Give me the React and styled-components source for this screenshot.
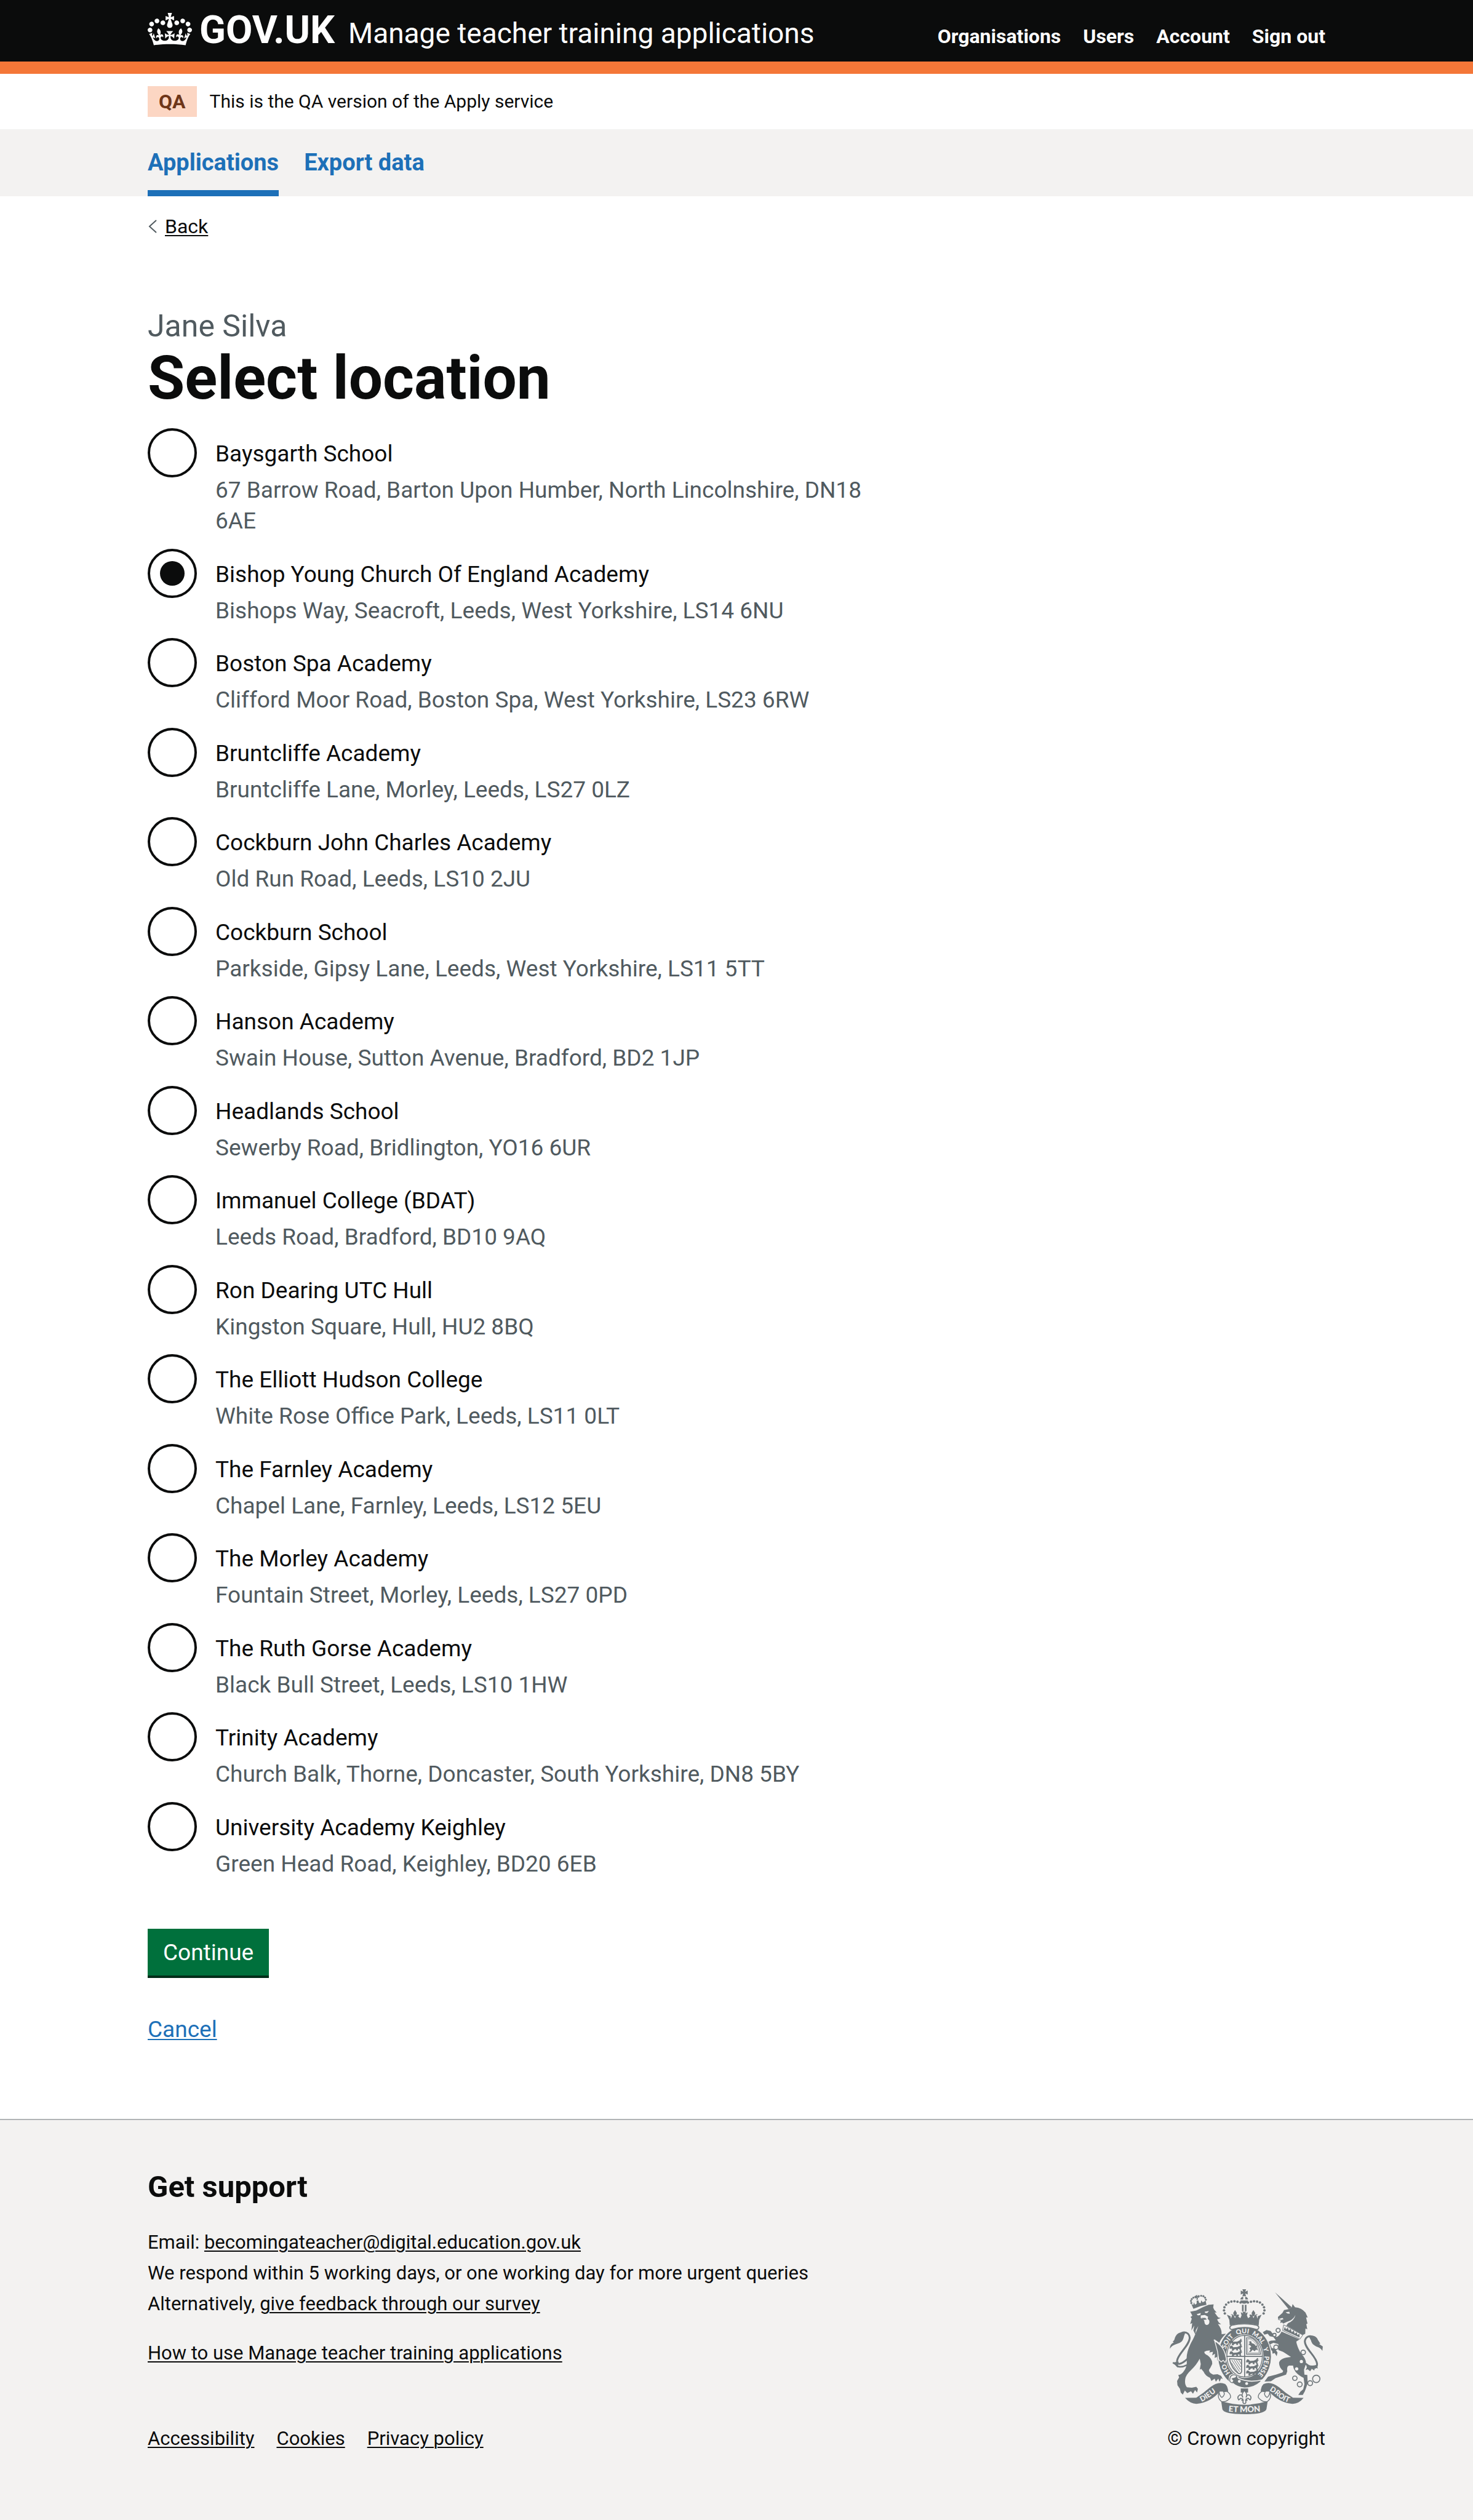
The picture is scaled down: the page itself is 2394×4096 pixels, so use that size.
import React, { useState } from "react";
import styled, { createGlobalStyle, css } from "styled-components";

const color = {
  text: "#0b0c0c",
  secondary: "#505a5f",
  link: "#1d70b8",
  brand: "#f47738",
  panel: "#f3f2f1",
  border: "#b1b4b6",
  green: "#00703c",
  greenShadow: "#002d18",
  tagBack: "#fcd6c3",
  tagText: "#6e3619",
  crest: "#6f777b",
  white: "#ffffff",
};

const GlobalStyle = createGlobalStyle`
  *, *::before, *::after { box-sizing: border-box; }
  body {
    margin: 0;
    background: ${color.panel};
    color: ${color.text};
    font-family: Roboto, "Liberation Sans", sans-serif;
    font-size: 31px;
    line-height: 50px;
  }
`;

const Page = styled.div`
  display: flex;
  flex-direction: column;
  min-height: 100vh;
  background: ${color.white};
`;

const Container = styled.div`
  width: calc(100% - 60px);
  max-width: 1914px;
  margin: 0 auto;
`;

const underlined = css`
  text-decoration: underline;
  text-decoration-thickness: 2px;
  text-underline-offset: 3px;
`;

const TextLink = styled.a`
  color: ${(p) => (p.$blue ? color.link : color.text)};
  ${underlined}
`;

/* Header */

const Header = styled.header`
  background: ${color.text};
  border-bottom: 20px solid ${color.brand};
`;

const HeaderRow = styled(Container)`
  display: flex;
  align-items: baseline;
  justify-content: space-between;
  padding: 19px 0 11px;
  line-height: 60px;
  color: ${color.white};
`;

const Brand = styled.div`
  display: flex;
  align-items: baseline;
  gap: 22px;
`;

const HomeLink = styled.a`
  color: inherit;
  text-decoration: none;
  font-size: 63px;
  font-weight: 700;
  white-space: nowrap;
`;

const CrownIcon = styled.svg`
  width: 72px;
  height: 53px;
  margin-right: 12px;
  vertical-align: -4px;
  fill: currentColor;
`;

const ServiceLink = styled.a`
  color: inherit;
  text-decoration: none;
  font-size: 46px;
`;

const AccountNav = styled.nav`
  display: flex;
  gap: 36px;
`;

const AccountLink = styled.a`
  color: inherit;
  text-decoration: none;
  font-size: 32px;
  font-weight: 700;
`;

/* Phase banner */

const Banner = styled(Container)`
  display: flex;
  align-items: center;
  gap: 21px;
  padding: 20px 0;
  font-size: 30px;
`;

const Tag = styled.strong`
  padding: 0 18px;
  background: ${color.tagBack};
  color: ${color.tagText};
  font-size: 32px;
`;

/* Primary navigation */

const PrimaryNav = styled.nav`
  background: ${color.panel};
`;

const PrimaryList = styled(Container)`
  display: flex;
  gap: 41px;
`;

const PrimaryLink = styled.a`
  padding: 29px 0 20px;
  border-bottom: 10px solid ${(p) => (p.$current ? color.link : "transparent")};
  color: ${color.link};
  font-size: 38px;
  font-weight: 700;
  text-decoration: none;
`;

/* Main */

const Main = styled(Container).attrs({ as: "main" })`
  display: flex;
  flex: 1;
  flex-direction: column;
  padding: 29px 0 120px;
`;

const BackLink = styled.a`
  display: flex;
  align-items: center;
  align-self: flex-start;
  gap: 11px;
  color: ${color.text};
  font-size: 32px;
  line-height: 40px;
  text-decoration: none;
`;

const BackText = styled.span`
  ${underlined}
`;

const Chevron = styled.svg`
  width: 17px;
  height: 24px;
`;

const Form = styled.form`
  display: flex;
  flex: 1;
  flex-direction: column;
  align-items: flex-start;
  margin-top: 112px;
`;

const Caption = styled.span`
  color: ${color.secondary};
  font-size: 50px;
  line-height: 60px;
`;

const Title = styled.h1`
  margin: 5px 0 31px;
  font-size: 98px;
  line-height: 100px;
`;

const RadioList = styled.div`
  display: flex;
  flex: 1;
  flex-direction: column;
  justify-content: space-between;
  gap: 18px;
`;

const RadioItem = styled.div`
  display: flex;
  gap: 30px;
`;

const Radio = styled.input`
  appearance: none;
  display: grid;
  flex: none;
  place-content: center;
  width: 80px;
  height: 80px;
  margin: 0;
  border: 4px solid ${color.text};
  border-radius: 50%;
  background: ${color.white};
  cursor: pointer;

  &:checked::before {
    content: "";
    width: 40px;
    height: 40px;
    border-radius: 50%;
    background: ${color.text};
  }
`;

const RadioText = styled.div`
  display: flex;
  flex-direction: column;
  max-width: 1100px;
`;

const RadioLabel = styled.label`
  padding: 17px 0 9px;
  font-size: 37px;
  cursor: pointer;
`;

const RadioHint = styled.span`
  color: ${color.secondary};
  font-size: 37px;
`;

const SubmitButton = styled.button`
  margin: 80px 0 63px;
  padding: 14px 25px 12px;
  border: 0;
  background: ${color.green};
  box-shadow: 0 4px 0 ${color.greenShadow};
  color: ${color.white};
  font: inherit;
  font-size: 37px;
  cursor: pointer;
`;

const CancelLink = styled(TextLink)`
  font-size: 37px;
`;

/* Footer */

const Footer = styled.footer`
  border-top: 2px solid ${color.border};
  background: ${color.panel};
`;

const FooterRow = styled(Container)`
  display: flex;
  align-items: flex-end;
  justify-content: space-between;
  padding: 79px 0 107px;
`;

const SupportTitle = styled.h2`
  margin: 0 0 35px;
  font-size: 49px;
  line-height: 60px;
`;

const SupportLine = styled.p`
  margin: 0;
`;

const GuideLine = styled(SupportLine)`
  margin: 30px 0 89px;
`;

const MetaLinks = styled.nav`
  display: flex;
  gap: 36px;
`;

const Copyright = styled.a`
  display: flex;
  flex-direction: column;
  align-items: center;
  gap: 15px;
  color: ${color.text};
  text-decoration: none;
`;

const CrestArt = styled.svg`
  width: 249px;
  height: 203px;
  overflow: visible;
  font-family: Lato, sans-serif;
  font-weight: 900;
`;

const Crown = () => (
  <CrownIcon viewBox="0 0 132 97" aria-hidden="true">
    <path
      fillRule="evenodd"
      d="M25 30.2c3.5 1.5 7.7-.2 9.1-3.7 1.5-3.6-.2-7.8-3.9-9.2-3.6-1.4-7.6.3-9.1 3.9-1.4 3.5.3 7.5 3.9 9zM9 39.5c3.6 1.5 7.8-.2 9.2-3.7 1.5-3.6-.2-7.8-3.9-9.1-3.6-1.5-7.6.2-9.1 3.8-1.4 3.5.3 7.5 3.8 9zM4.4 57.2c3.5 1.5 7.7-.2 9.1-3.8 1.5-3.6-.2-7.7-3.9-9.1-3.5-1.5-7.6.3-9.1 3.8-1.4 3.5.3 7.6 3.9 9.1zm38.3-21.4c3.5 1.5 7.7-.2 9.1-3.8 1.5-3.6-.2-7.7-3.9-9.1-3.6-1.5-7.6.3-9.1 3.8-1.3 3.6.4 7.7 3.9 9.1zm64.4-5.6c-3.6 1.5-7.8-.2-9.1-3.7-1.5-3.6.2-7.8 3.8-9.2 3.6-1.4 7.7.3 9.2 3.9 1.3 3.5-.4 7.5-3.9 9zm15.9 9.3c-3.6 1.5-7.7-.2-9.1-3.7-1.5-3.6.2-7.8 3.7-9.1 3.6-1.5 7.7.2 9.2 3.8 1.5 3.5-.3 7.5-3.8 9zm4.7 17.7c-3.6 1.5-7.8-.2-9.2-3.8-1.5-3.6.2-7.7 3.9-9.1 3.6-1.5 7.7.3 9.2 3.8 1.3 3.5-.4 7.6-3.9 9.1zM89.3 35.8c-3.6 1.5-7.8-.2-9.2-3.8-1.4-3.6.2-7.7 3.9-9.1 3.6-1.5 7.7.3 9.2 3.8 1.4 3.6-.3 7.7-3.9 9.1zM69.7 17.7l8.9 4.7V9.3l-8.9 2.8c-.2-.3-.5-.6-.9-.9L72.4 0H59.6l3.5 11.2c-.3.3-.6.5-.9.9l-8.8-2.8v13.1l8.8-4.7c.3.3.6.7.9.9l-5 15.4v.1c-.2.8-.4 1.6-.4 2.4 0 4.1 3.1 7.5 7 8.1h.2c.3 0 .7.1 1 .1.4 0 .7 0 1-.1h.2c4-.6 7.1-4.1 7.1-8.1 0-.8-.1-1.7-.4-2.4V34l-5.1-15.4c.4-.2.7-.6 1-.9zM66 92.8c16.9 0 32.8 1.1 47.1 3.2 4-16.9 8.9-26.7 14-33.5l-9.6-3.4c1 4.9 1.1 7.2 0 10.2-1.5-1.4-3-4.3-4.2-8.7L108.6 76c2.8-2 5-3.2 7.5-3.3-4.4 9.4-10 11.9-13.6 11.2-4.3-.8-6.3-4.6-5.6-7.9 1-4.7 5.7-5.9 8-.5 4.3-8.7-3-11.4-7.6-8.8 7.1-7.2 7.9-13.5 2.1-21.1-8 6.1-8.1 12.3-4.5 20.8-4.7-5.4-12.1-2.5-9.5 6.2 3.4-5.2 7.9-2 7.2 3.1-.6 4.3-6.4 7.8-13.5 7.2-10.3-.9-10.9-8-11.2-13.8 2.5-.5 7.1 1.8 11 7.3L80.2 60c-4.1 4.4-8 5.3-12.3 5.4 1.4-4.4 8-11.6 8-11.6H55.5s6.4 7.2 7.9 11.6c-4.2-.1-8-1-12.3-5.4l1.4 16.4c3.9-5.5 8.5-7.7 10.9-7.3-.3 5.8-.9 12.8-11.1 13.8-7.2.6-12.9-2.9-13.5-7.2-.7-5 3.8-8.3 7.1-3.1 2.7-8.7-4.6-11.6-9.4-6.2 3.7-8.5 3.6-14.7-4.6-20.8-5.8 7.6-5 13.9 2.2 21.1-4.7-2.6-11.9.1-7.7 8.8 2.3-5.5 7.1-4.2 8.1.5.7 3.3-1.3 7.1-5.7 7.9-3.5.7-9-1.8-13.5-11.2 2.5.1 4.7 1.3 7.5 3.3l-4.7-15.4c-1.2 4.4-2.7 7.2-4.3 8.7-1.1-3-.9-5.3 0-10.2l-9.5 3.4c5 6.9 9.9 16.7 14 33.5 14.8-2.1 30.8-3.2 47.7-3.2z"
    />
  </CrownIcon>
);

const archPearls = [
  [479, 161], [464, 157], [449, 155], [434, 156], [420, 161], [408, 171], [400, 184], [398, 199], [402, 214],
];
const smallPearls = [
  [258, 133], [248, 137], [240, 144], [236, 153], [238, 163], [274, 130], [286, 128], [297, 130], [305, 137], [309, 147],
];
const chainRings = [
  [663, 297, 10], [645, 320, 8], [653, 380, 11], [786, 405, 11], [745, 532, 11], [769, 562, 12], [820, 556, 12], [850, 535, 18],
];
const mottoes = [
  ["HO", "16%"], ["SOIT", "36%"], ["QUI", "48.5%"], ["MAL", "60.5%"], ["Y", "70%"], ["PENSE", "82%"],
];

/* One quarter with three walking lions. */
const ThreeLions = ({ x, y }) => (
  <g transform={`translate(${x} ${y})`} fill={color.crest}>
    {[0, 27, 54].map((dy) => (
      <path
        key={dy}
        d={`M2 ${dy + 6}l6-5 8 3 3 5 20-1 12-6 4-7 5 1-1 7 5 2-6 5-2 9 4 5-9 1-2-8-8 1 3 6-9 1-2-7-9 2-4 6-9 0 3-6-2-5-6 2-7-3 4-3z`}
      />
    ))}
  </g>
);

const Crest = () => (
  <CrestArt viewBox="132 96 750 612" aria-hidden="true">
    <defs>
      <path id="garter" d="M499 541a97 115 0 0 1 0-230a97 115 0 0 1 0 230" />
      <path id="scrollLeft" d="M272 655Q312 638 344 611Q362 596 392 590" />
      <path id="scrollRight" d="M604 584Q640 600 664 624Q690 645 734 657" />
      <path id="scrollMid" d="M400 693Q498 704 596 693" />
    </defs>

    {/* Lion tail */}
    <g fill="none" stroke={color.crest} strokeLinecap="round">
      <path strokeWidth="9" d="M180 318C200 298 228 306 230 334C228 372 172 412 168 446C166 466 182 470 220 436" />
      <path strokeWidth="8" d="M150 457Q164 462 172 474Q190 480 214 468" />
    </g>
    <path fill={color.crest} d="M133 388C132 372 140 362 152 356L146 352C158 346 154 336 162 324C172 308 190 304 208 312C200 322 202 340 190 352C174 366 144 364 133 388ZM148 455L176 450L170 480Z" />

    {/* Lion */}
    <path
      fill={color.crest}
      d="M236 212L232 206L262 200Q295 182 322 172L347 170L345 186L350 196L362 210L352 210L362 224L370 234L382 237L364 244L372 258L384 268L368 266Q388 290 386 316L408 314Q384 335 373 362L350 345L375 374Q398 384 402 412L408 440L402 456L393 446L386 454L380 442L366 446L364 428L352 432L354 412L340 420L344 402L326 406L330 396Q314 394 302 402Q300 412 318 420Q342 438 340 462Q332 480 324 492Q326 508 345 514L366 512L384 520L392 536L384 532L376 550L370 534L358 549L352 534L336 545L330 530Q306 520 298 500L286 486L279 490L284 462L279 436Q262 468 238 490Q210 516 208 536Q204 562 216 576L240 578L262 574L270 584L266 602L256 590L246 608L236 596L218 605L206 592L196 612L186 602L182 584L170 566L168 545L178 528L174 516Q190 516 206 490Q218 470 215 442Q212 400 244 345Q258 318 272 276L260 296L258 318L248 298L252 274L238 298L242 262L232 266L240 240L234 232L243 226Z"
    />
    <g fill={color.panel}>
      <path d="M264 218L284 212L282 222L270 224ZM303 206L324 202L316 212L306 212ZM284 224L304 222L320 230L318 240L326 250Q328 268 315 271Q302 270 302 254L296 240L284 238Z" />
      <path d="M288 236L306 236L314 244L300 246Z" fill={color.crest} />
      <path d="M346 344L378 368L400 396L406 418L410 408Q404 380 384 364L352 342Z" />
    </g>

    {/* Lion's crown */}
    <g fill={color.crest}>
      {smallPearls.map(([cx, cy]) => <circle key={`${cx}-${cy}`} cx={cx} cy={cy} r="5" />)}
      <path d="M259 126L268 124L266 131L273 128L275 138L268 136L271 146L263 148L264 138L257 141L255 132L262 133ZM238 168L248 172L250 160L256 171L264 166L264 152L272 150L276 162L284 164L286 150L294 160L308 152L312 172L284 178L248 192Z" />
    </g>

    {/* Unicorn tail */}
    <g fill="none" stroke={color.crest} strokeLinecap="round">
      <path strokeWidth="9" d="M838 330C816 320 796 328 794 352C796 390 852 426 854 462C854 486 832 488 800 462" />
    </g>
    <path fill={color.crest} d="M815 330C832 318 852 326 858 344L870 362L864 364L882 376L880 398Q872 382 850 376Q828 366 824 346ZM798 460Q820 476 852 466L858 484L844 480L840 494L828 486L820 498L808 488L798 492L804 478Z" />

    {/* Unicorn */}
    <g fill={color.crest}>
      <path d="M648 111L730 184L714 193Z" />
      <path d="M714 193L730 184L734 168L746 184Q778 186 797 210L808 234L800 234L807 264L801 266L806 292L797 288L796 314L784 320Q748 300 703 274L712 262Q742 250 748 222Q736 248 706 256L688 264L682 258L674 262L676 248L664 246L662 232L684 212L692 198Z" />
      <path d="M680 303L768 342L752 352Q756 378 776 412Q800 436 800 460L790 490L792 514L806 516L808 556L800 580L794 596L784 614L762 614L772 598L786 586L792 560L788 530Q762 518 748 500Q738 488 736 470L718 470Q704 472 708 498L702 514L650 532L628 547L596 548L614 524L652 514L684 504L688 496Q666 478 668 454Q676 432 726 428Q700 410 686 402L664 394L664 364L640 358L624 366L632 384L648 388L660 406L656 424L646 408L636 412L634 398L622 388L608 356L628 348L652 346L640 330L622 326L612 314L596 318L588 306L606 296L626 300L634 310L652 330Q668 328 680 303Z" />
    </g>
    <g fill={color.panel}>
      <path d="M700 208L718 206L720 216L708 214ZM664 242L684 236L690 242L678 246Z" />
      <circle cx="777" cy="450" r="8" />
      <circle cx="754" cy="486" r="8" />
    </g>
    <path fill={color.panel} stroke={color.crest} strokeWidth="3" d="M690 270L784 320L770 340L685 298Z" />
    <path fill={color.crest} d="M690 296L696 280L702 292L710 284L716 298L724 290L730 306L740 298L744 314L754 306L758 320L768 314L768 332Z" />
    {chainRings.map(([cx, cy, r]) => (
      <circle key={`${cx}-${cy}`} cx={cx} cy={cy} r={r} fill={color.panel} stroke={color.crest} strokeWidth="5" />
    ))}

    {/* Garter */}
    <ellipse cx="499" cy="426" rx="133" ry="153" fill={color.panel} />
    <ellipse cx="499" cy="426" rx="129" ry="149" fill={color.crest} />
    <ellipse cx="499" cy="424" rx="92" ry="107" fill={color.panel} />
    <ellipse cx="499" cy="424" rx="87" ry="102" fill="none" stroke={color.crest} strokeWidth="4" />
    <g fill={color.panel} fontSize="32" textAnchor="middle">
      {mottoes.map(([word, offset]) => (
        <text key={word}>
          <textPath href="#garter" startOffset={offset}>{word}</textPath>
        </text>
      ))}
    </g>

    {/* Quartered arms */}
    <path stroke={color.crest} strokeWidth="5" d="M499 322V526M410 425H588" />
    <ThreeLions x="424" y="344" />
    <ThreeLions x="505" y="438" />
    <g fill="none" stroke={color.crest}>
      <path strokeWidth="4" d="M508 334H530Q568 350 577 414H508Z" />
      <path strokeWidth="2" d="M514 340H528Q560 354 570 408H514Z" />
      <path strokeWidth="5" d="M424 436L484 440V500Q480 512 468 508Q436 486 424 436" />
      <path strokeWidth="3" d="M436 442L474 500M447 442L478 490M458 442L480 476M434 456L466 504M470 442L482 462" />
    </g>
    <path fill={color.crest} d="M520 352L530 350L534 360L546 364L554 374L562 370L558 382L564 394L554 392L548 400L538 392L530 402L520 404L528 392L522 384L532 378L526 370L518 368L524 360Z" />

    {/* Lion's paw over the garter, and the buckle */}
    <path fill={color.crest} stroke={color.panel} strokeWidth="4" d="M352 348Q392 372 404 414L410 440L403 455L394 444L384 452L372 440L366 400Z" />
    <path fill={color.crest} stroke={color.panel} strokeWidth="5" d="M426 520Q440 506 462 518L468 532Q520 556 586 540Q556 578 499 580Q462 576 440 556Q418 556 426 520Z" />
    <path fill={color.panel} stroke={color.crest} strokeWidth="4" d="M430 524Q442 508 462 520L454 530L438 534L446 544L440 554Q418 552 430 524Z" />
    <circle cx="473" cy="547" r="7" fill={color.panel} />
    <circle cx="509" cy="558" r="7" fill={color.panel} />

    {/* Crown */}
    <g fill={color.crest}>
      {archPearls.map(([cx, cy]) => (
        <React.Fragment key={`${cx}-${cy}`}>
          <circle cx={cx} cy={cy} r="6" />
          <circle cx={994 - cx} cy={cy} r="6" />
        </React.Fragment>
      ))}
      <path d="M488 96H506L502 108L514 102V122L502 116L506 130H488L492 116L480 122V102L492 108Z" />
      <path d="M478 146Q480 134 492 132V146ZM502 132Q514 134 516 146H502ZM478 151H516Q514 166 497 167Q480 166 478 151ZM486 172H494V204H486ZM500 172H508V204H500Z" />
      <path d="M412 220L430 228L432 240L438 222L430 220Q440 214 446 226L452 238L456 226Q462 216 472 222L468 230L478 238L484 224L480 208L492 214L488 206H506L502 214L514 208L510 224L516 238L526 230L522 222Q532 216 538 226L542 238L548 226Q554 214 564 220L556 222L562 240L564 228L582 220L570 246L568 272Q497 254 426 272L424 246Z" />
      <path d="M452 198L461 212L457 228H447L443 212ZM542 198L551 212L547 228H537L533 212Z" />
    </g>
    <path fill={color.panel} stroke={color.crest} strokeWidth="5" d="M436 272Q497 258 558 272Q570 276 568 286Q564 296 554 292Q497 274 440 292Q430 296 426 286Q426 276 436 272Z" />

    {/* Scroll */}
    <g fill={color.crest}>
      <path d="M207 628L262 627Q296 606 330 576Q370 544 404 560Q418 574 418 597H378Q330 650 268 657Q236 660 207 628Z" />
      <path d="M788 628L736 627Q700 606 668 576Q626 544 592 560Q578 574 578 597H618Q668 650 728 657Q762 660 788 628Z" />
      <path d="M384 644Q498 680 612 644L606 682Q600 708 498 708Q396 708 390 684Z" />
    </g>
    <g fill={color.panel} stroke={color.crest} strokeWidth="4">
      <path d="M374 600Q362 628 386 646Q412 650 430 626Q432 608 412 596L396 598Q406 612 388 626Q376 620 374 600Z" />
      <path d="M622 600Q634 628 610 646Q584 650 566 626Q564 608 584 596L600 598Q590 612 608 626Q620 620 622 600Z" />
    </g>
    <g fill={color.panel} fontSize="36" textAnchor="middle">
      <text><textPath href="#scrollLeft" startOffset="44%">DIEU</textPath></text>
      <text><textPath href="#scrollRight" startOffset="49%">DROIT</textPath></text>
      <text fontSize="40"><textPath href="#scrollMid" startOffset="50%">ET MON</textPath></text>
    </g>

    {/* Fleur-de-lis */}
    <path fill={color.crest} d="M480 582H516V602H480Z" />
    <path fill={color.panel} stroke={color.crest} strokeWidth="5" d="M498 592Q516 612 506 626Q508 610 522 614Q536 624 526 638L516 630L506 634L510 640H504Q508 656 498 656Q488 656 492 640H486L490 634L480 630L470 638Q460 624 474 614Q488 610 490 626Q480 612 498 592Z" />
  </CrestArt>
);

const accountLinks = ["Organisations", "Users", "Account", "Sign out"];

const locations = [
  ["Baysgarth School", "67 Barrow Road, Barton Upon Humber, North Lincolnshire, DN18 6AE"],
  ["Bishop Young Church Of England Academy", "Bishops Way, Seacroft, Leeds, West Yorkshire, LS14 6NU"],
  ["Boston Spa Academy", "Clifford Moor Road, Boston Spa, West Yorkshire, LS23 6RW"],
  ["Bruntcliffe Academy", "Bruntcliffe Lane, Morley, Leeds, LS27 0LZ"],
  ["Cockburn John Charles Academy", "Old Run Road, Leeds, LS10 2JU"],
  ["Cockburn School", "Parkside, Gipsy Lane, Leeds, West Yorkshire, LS11 5TT"],
  ["Hanson Academy", "Swain House, Sutton Avenue, Bradford, BD2 1JP"],
  ["Headlands School", "Sewerby Road, Bridlington, YO16 6UR"],
  ["Immanuel College (BDAT)", "Leeds Road, Bradford, BD10 9AQ"],
  ["Ron Dearing UTC Hull", "Kingston Square, Hull, HU2 8BQ"],
  ["The Elliott Hudson College", "White Rose Office Park, Leeds, LS11 0LT"],
  ["The Farnley Academy", "Chapel Lane, Farnley, Leeds, LS12 5EU"],
  ["The Morley Academy", "Fountain Street, Morley, Leeds, LS27 0PD"],
  ["The Ruth Gorse Academy", "Black Bull Street, Leeds, LS10 1HW"],
  ["Trinity Academy", "Church Balk, Thorne, Doncaster, South Yorkshire, DN8 5BY"],
  ["University Academy Keighley", "Green Head Road, Keighley, BD20 6EB"],
];

export default function App() {
  const [selected, setSelected] = useState(1);

  return (
    <Page>
      <GlobalStyle />
      <Header>
        <HeaderRow>
          <Brand>
            <HomeLink href="#home">
              <Crown />
              GOV.UK
            </HomeLink>
            <ServiceLink href="#service">Manage teacher training applications</ServiceLink>
          </Brand>
          <AccountNav aria-label="Account">
            {accountLinks.map((name) => (
              <AccountLink key={name} href="#account">{name}</AccountLink>
            ))}
          </AccountNav>
        </HeaderRow>
      </Header>

      <Banner>
        <Tag>QA</Tag>
        <span>This is the QA version of the Apply service</span>
      </Banner>

      <PrimaryNav aria-label="Primary">
        <PrimaryList>
          <PrimaryLink href="#applications" $current aria-current="page">Applications</PrimaryLink>
          <PrimaryLink href="#export">Export data</PrimaryLink>
        </PrimaryList>
      </PrimaryNav>

      <Main>
        <BackLink href="#back">
          <Chevron viewBox="0 0 17 24" aria-hidden="true">
            <path d="M14 2L3 12L14 22" fill="none" stroke={color.secondary} strokeWidth="2" />
          </Chevron>
          <BackText>Back</BackText>
        </BackLink>

        <Form onSubmit={(event) => event.preventDefault()}>
          <Caption>Jane Silva</Caption>
          <Title id="title">Select location</Title>
          <RadioList role="radiogroup" aria-labelledby="title">
            {locations.map(([name, address], index) => (
              <RadioItem key={name}>
                <Radio
                  type="radio"
                  name="location"
                  id={`location-${index}`}
                  aria-describedby={`address-${index}`}
                  checked={selected === index}
                  onChange={() => setSelected(index)}
                />
                <RadioText>
                  <RadioLabel htmlFor={`location-${index}`}>{name}</RadioLabel>
                  <RadioHint id={`address-${index}`}>{address}</RadioHint>
                </RadioText>
              </RadioItem>
            ))}
          </RadioList>
          <SubmitButton type="submit">Continue</SubmitButton>
          <CancelLink href="#cancel" $blue>Cancel</CancelLink>
        </Form>
      </Main>

      <Footer>
        <FooterRow>
          <div>
            <SupportTitle>Get support</SupportTitle>
            <SupportLine>
              Email: <TextLink href="mailto:becomingateacher@digital.education.gov.uk">becomingateacher@digital.education.gov.uk</TextLink>
            </SupportLine>
            <SupportLine>We respond within 5 working days, or one working day for more urgent queries</SupportLine>
            <SupportLine>
              Alternatively, <TextLink href="#survey">give feedback through our survey</TextLink>
            </SupportLine>
            <GuideLine>
              <TextLink href="#guide">How to use Manage teacher training applications</TextLink>
            </GuideLine>
            <MetaLinks aria-label="Footer">
              <TextLink href="#accessibility">Accessibility</TextLink>
              <TextLink href="#cookies">Cookies</TextLink>
              <TextLink href="#privacy">Privacy policy</TextLink>
            </MetaLinks>
          </div>
          <Copyright href="#copyright">
            <Crest />
            <span>© Crown copyright</span>
          </Copyright>
        </FooterRow>
      </Footer>
    </Page>
  );
}
